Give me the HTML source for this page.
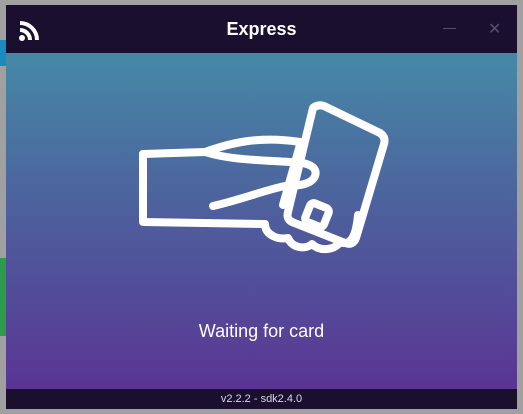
<!DOCTYPE html>
<html><head><style>
body{margin:0;width:523px;height:414px;background:#a0a0a0;position:relative;overflow:hidden;font-family:"Liberation Sans",sans-serif}
.l1{position:absolute;left:0;top:40px;width:8px;height:26px;background:#1a8ac0}
.l2{position:absolute;left:0;top:258px;width:8px;height:78px;background:#2e9a4c}
.win{position:absolute;left:6px;top:5px;width:511px;height:404px;background:#1b0f30}
.title{position:absolute;left:0;top:0;width:511px;height:48px;color:#fff;font-weight:bold;font-size:18px;text-align:center;line-height:48px}
.content{position:absolute;left:0;top:48px;width:511px;height:336px;background:linear-gradient(#4589a6,#4e5d9c 50%,#5a3594)}
.foot{position:absolute;left:0;top:384px;width:511px;height:20px;color:#d8d8e0;font-size:11px;text-align:center;line-height:20px}
.wait{position:absolute;left:0;top:268px;width:511px;text-align:center;color:#fff;font-size:18px}
</style></head><body>
<div class="l1"></div><div class="l2"></div>
<div class="win">
<div class="title">Express</div>
<svg style="position:absolute;left:12px;top:15px" width="22" height="22" viewBox="0 0 22 22"><circle cx="4" cy="18" r="3" fill="#fff"/><path d="M2 10a10 10 0 0 1 10 10M2 3a17 17 0 0 1 17 17" stroke="#fff" stroke-width="4" fill="none"/></svg>
<div style="position:absolute;left:437px;top:23px;width:13px;height:1px;background:#5a4f70"></div>
<div style="position:absolute;left:482px;top:14px;color:#5a4f70;font-size:16px">✕</div>
<div class="content">
<svg style="position:absolute;left:0;top:0" width="511" height="336" viewBox="6 53 511 336" fill="none" stroke="#fff" stroke-width="8" stroke-linecap="round" stroke-linejoin="round">
<path d="M313 108 Q318 104 324 106 L380 133 Q386 137 384 144 L356 238 Q353 246 345 243 L292 222 Q286 219 288 212 Z"/>
<path d="M300 145 L283 205"/>
<rect x="307" y="205" width="20" height="20" rx="4" transform="rotate(22 317 215)"/>
<path d="M143 154 L143 222 L265 224"/>
<path d="M143 154 L205 152 C225 145 255 135 300 142"/>
<path d="M205 152 C230 160 260 160 290 162 C310 162 318 168 315 176 C312 184 300 186 285 186 C265 190 240 200 213 206"/>
<path d="M265 224 C265 235 278 240 288 238 C292 248 305 250 312 244 C320 252 335 250 340 242 C350 246 356 238 358 215"/>
</svg>
<div class="wait">Waiting for card</div>
</div>
<div class="foot">v2.2.2 - sdk2.4.0</div>
</div>
</body></html>
